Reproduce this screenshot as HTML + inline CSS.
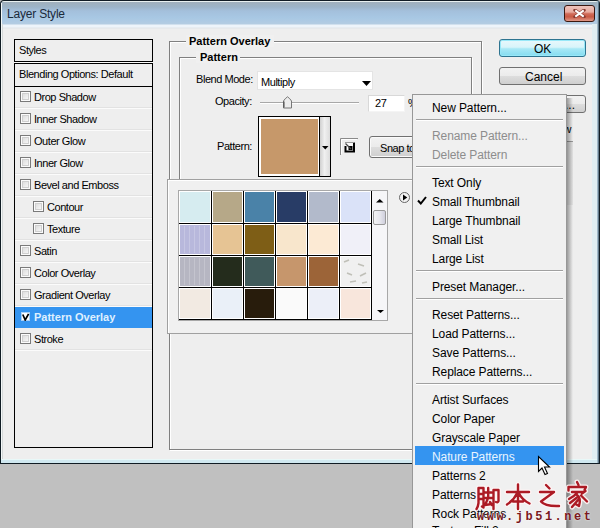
<!DOCTYPE html>
<html><head><meta charset="utf-8">
<style>
*{margin:0;padding:0;box-sizing:border-box}
html,body{width:600px;height:528px;overflow:hidden;background:#c0c0c0;font-family:"Liberation Sans",sans-serif;}
.a{position:absolute}
.t{position:absolute;white-space:nowrap;font-size:11px;line-height:11px;letter-spacing:-0.45px;color:#000}
.m{position:absolute;white-space:nowrap;font-size:12px;line-height:12px;letter-spacing:-0.1px;color:#000}
</style></head><body>
<!-- window frame -->
<div class="a" style="left:0;top:0;width:600px;height:464px;background:#101c24;border-radius:4px 4px 0 0"></div>
<div class="a" style="left:1px;top:1px;width:598px;height:462px;background:linear-gradient(#e8f0f0 0px,#e8f0f0 1px,#a0b0bc 1px,#9cb4c8 6px,#a4c0dc 10px,#a8c8e4 17px,#b4cce2 23px,#eef4fa 24px,#eef4fa 26px,#e0e4e8 27px,#eeeeee 28px);border-radius:3px 3px 0 0"></div>
<div class="a" style="left:1px;top:3px;width:1px;height:456px;background:#f4f8f8"></div>
<div class="a" style="left:2px;top:24px;width:1px;height:435px;background:#d4d8d8"></div>
<div class="a" style="left:592px;top:24px;width:5px;height:439px;background:#e0eef2"></div>
<div class="a" style="left:597px;top:1px;width:1px;height:462px;background:#a0b8c8"></div>
<div class="a" style="left:598px;top:1px;width:1px;height:462px;background:#607888"></div>
<div class="a" style="left:1px;top:459px;width:596px;height:1px;background:#e8f8f8"></div>
<div class="a" style="left:1px;top:460px;width:596px;height:3px;background:#d0e8f0"></div>
<div class="a" style="left:7px;top:8px;font-size:12px;line-height:12px;letter-spacing:-0.2px;color:#1a2a3a;white-space:nowrap">Layer Style</div>
<!-- close btn -->
<div class="a" style="left:564px;top:5px;width:31px;height:17px;border:1px solid #3a1810;border-radius:3px;background:linear-gradient(#f0c4bc 0%,#e8aca0 40%,#d06a58 52%,#c85a44 72%,#e09888 100%)"></div>
<svg class="a" style="left:573px;top:9px" width="13" height="9" viewBox="0 0 13 9"><path d="M2 1.2 L11 7.8 M11 1.2 L2 7.8" stroke="#8a3a30" stroke-width="3.4" stroke-linecap="round"/><path d="M2.3 1.4 L10.7 7.6 M10.7 1.4 L2.3 7.6" stroke="#fff" stroke-width="2"/></svg>
<!-- left styles panel -->
<div class="a" style="left:14px;top:39px;width:139px;height:409px;border:1px solid #000;background:#eeeeee"></div>
<div class="a" style="left:14px;top:61px;width:139px;height:3px;border-top:1px solid #000;border-bottom:1px solid #000;background:#fafafa"></div>
<div class="t" style="left:19px;top:45px">Styles</div>
<div class="a" style="left:15px;top:86px;width:137px;height:1px;background:#000"></div>
<div class="t" style="left:19px;top:69px">Blending Options: Default</div>
<div id="rows"><div class="a" style="left:15px;top:107px;width:137px;height:1px;background:#e2e2e2"></div><div class="a" style="left:15px;top:108px;width:137px;height:1px;background:#fbfbfb"></div><div class="a" style="left:20px;top:91px;width:11px;height:11px;border:1px solid #7a7a7a;background:#fbfbfb"></div><div class="a" style="left:22px;top:93px;width:7px;height:7px;border:1px solid #cfcfcf;background:linear-gradient(135deg,#dedede,#f6f6f6)"></div><div class="t" style="left:34px;top:92px">Drop Shadow</div><div class="a" style="left:15px;top:129px;width:137px;height:1px;background:#e2e2e2"></div><div class="a" style="left:15px;top:130px;width:137px;height:1px;background:#fbfbfb"></div><div class="a" style="left:20px;top:113px;width:11px;height:11px;border:1px solid #7a7a7a;background:#fbfbfb"></div><div class="a" style="left:22px;top:115px;width:7px;height:7px;border:1px solid #cfcfcf;background:linear-gradient(135deg,#dedede,#f6f6f6)"></div><div class="t" style="left:34px;top:114px">Inner Shadow</div><div class="a" style="left:15px;top:151px;width:137px;height:1px;background:#e2e2e2"></div><div class="a" style="left:15px;top:152px;width:137px;height:1px;background:#fbfbfb"></div><div class="a" style="left:20px;top:135px;width:11px;height:11px;border:1px solid #7a7a7a;background:#fbfbfb"></div><div class="a" style="left:22px;top:137px;width:7px;height:7px;border:1px solid #cfcfcf;background:linear-gradient(135deg,#dedede,#f6f6f6)"></div><div class="t" style="left:34px;top:136px">Outer Glow</div><div class="a" style="left:15px;top:173px;width:137px;height:1px;background:#e2e2e2"></div><div class="a" style="left:15px;top:174px;width:137px;height:1px;background:#fbfbfb"></div><div class="a" style="left:20px;top:157px;width:11px;height:11px;border:1px solid #7a7a7a;background:#fbfbfb"></div><div class="a" style="left:22px;top:159px;width:7px;height:7px;border:1px solid #cfcfcf;background:linear-gradient(135deg,#dedede,#f6f6f6)"></div><div class="t" style="left:34px;top:158px">Inner Glow</div><div class="a" style="left:15px;top:195px;width:137px;height:1px;background:#e2e2e2"></div><div class="a" style="left:15px;top:196px;width:137px;height:1px;background:#fbfbfb"></div><div class="a" style="left:20px;top:179px;width:11px;height:11px;border:1px solid #7a7a7a;background:#fbfbfb"></div><div class="a" style="left:22px;top:181px;width:7px;height:7px;border:1px solid #cfcfcf;background:linear-gradient(135deg,#dedede,#f6f6f6)"></div><div class="t" style="left:34px;top:180px">Bevel and Emboss</div><div class="a" style="left:15px;top:217px;width:137px;height:1px;background:#e2e2e2"></div><div class="a" style="left:15px;top:218px;width:137px;height:1px;background:#fbfbfb"></div><div class="a" style="left:33px;top:201px;width:11px;height:11px;border:1px solid #7a7a7a;background:#fbfbfb"></div><div class="a" style="left:35px;top:203px;width:7px;height:7px;border:1px solid #cfcfcf;background:linear-gradient(135deg,#dedede,#f6f6f6)"></div><div class="t" style="left:47px;top:202px">Contour</div><div class="a" style="left:15px;top:239px;width:137px;height:1px;background:#e2e2e2"></div><div class="a" style="left:15px;top:240px;width:137px;height:1px;background:#fbfbfb"></div><div class="a" style="left:33px;top:223px;width:11px;height:11px;border:1px solid #7a7a7a;background:#fbfbfb"></div><div class="a" style="left:35px;top:225px;width:7px;height:7px;border:1px solid #cfcfcf;background:linear-gradient(135deg,#dedede,#f6f6f6)"></div><div class="t" style="left:47px;top:224px">Texture</div><div class="a" style="left:15px;top:261px;width:137px;height:1px;background:#e2e2e2"></div><div class="a" style="left:15px;top:262px;width:137px;height:1px;background:#fbfbfb"></div><div class="a" style="left:20px;top:245px;width:11px;height:11px;border:1px solid #7a7a7a;background:#fbfbfb"></div><div class="a" style="left:22px;top:247px;width:7px;height:7px;border:1px solid #cfcfcf;background:linear-gradient(135deg,#dedede,#f6f6f6)"></div><div class="t" style="left:34px;top:246px">Satin</div><div class="a" style="left:15px;top:283px;width:137px;height:1px;background:#e2e2e2"></div><div class="a" style="left:15px;top:284px;width:137px;height:1px;background:#fbfbfb"></div><div class="a" style="left:20px;top:267px;width:11px;height:11px;border:1px solid #7a7a7a;background:#fbfbfb"></div><div class="a" style="left:22px;top:269px;width:7px;height:7px;border:1px solid #cfcfcf;background:linear-gradient(135deg,#dedede,#f6f6f6)"></div><div class="t" style="left:34px;top:268px">Color Overlay</div><div class="a" style="left:15px;top:305px;width:137px;height:1px;background:#e2e2e2"></div><div class="a" style="left:15px;top:306px;width:137px;height:1px;background:#fbfbfb"></div><div class="a" style="left:20px;top:289px;width:11px;height:11px;border:1px solid #7a7a7a;background:#fbfbfb"></div><div class="a" style="left:22px;top:291px;width:7px;height:7px;border:1px solid #cfcfcf;background:linear-gradient(135deg,#dedede,#f6f6f6)"></div><div class="t" style="left:34px;top:290px">Gradient Overlay</div><div class="a" style="left:15px;top:307px;width:137px;height:21px;background:#3494f0"></div><div class="a" style="left:21px;top:312px;width:9px;height:9px;border:1px solid #a8d0f8;background:#fff"></div><svg class="a" style="left:21px;top:312px" width="9" height="9"><path d="M1.8 2.5 L4.2 8 L7.6 1.8" stroke="#000" stroke-width="1.7" fill="none"/></svg><div class="t" style="left:34px;top:312px;font-weight:bold;letter-spacing:0;color:#dff0ff">Pattern Overlay</div><div class="a" style="left:15px;top:349px;width:137px;height:1px;background:#e2e2e2"></div><div class="a" style="left:15px;top:350px;width:137px;height:1px;background:#fbfbfb"></div><div class="a" style="left:20px;top:333px;width:11px;height:11px;border:1px solid #7a7a7a;background:#fbfbfb"></div><div class="a" style="left:22px;top:335px;width:7px;height:7px;border:1px solid #cfcfcf;background:linear-gradient(135deg,#dedede,#f6f6f6)"></div><div class="t" style="left:34px;top:334px">Stroke</div></div>

<!-- right group box -->
<div class="a" style="left:169px;top:41px;width:313px;height:409px;border:1px solid #808080;box-shadow:inset 1px 1px 0 #fff, 1px 1px 0 #fff"></div>
<div class="a" style="left:186px;top:35px;width:88px;height:12px;background:#f0f0f0"></div>
<div class="t" style="left:189px;top:36px;font-weight:bold;letter-spacing:0">Pattern Overlay</div>
<div class="a" style="left:179px;top:57px;width:293px;height:200px;border:1px solid #808080;box-shadow:inset 1px 1px 0 #fff, 1px 1px 0 #fff"></div>
<div class="a" style="left:196px;top:51px;width:44px;height:12px;background:#f0f0f0"></div>
<div class="t" style="left:200px;top:52px;font-weight:bold;letter-spacing:0">Pattern</div>

<div class="t" style="left:196px;top:74px">Blend Mode:</div>
<div class="a" style="left:257px;top:71px;width:116px;height:19px;background:#fff;border:1px solid #e4e4e4"></div>
<div class="t" style="left:261px;top:77px">Multiply</div>
<svg class="a" style="left:362px;top:81px" width="10" height="6"><path d="M0 0 H9 L4.5 5 Z" fill="#000"/></svg>

<div class="t" style="left:215px;top:96px">Opacity:</div>
<div class="a" style="left:260px;top:102px;width:99px;height:2px;border-top:1px solid #a8a8a8;border-bottom:1px solid #fff"></div>
<svg class="a" style="left:282px;top:96px" width="11" height="13"><path d="M1.5 12 V5 Q3 2.5 5.5 0.8 Q8 2.5 9.5 5 V12 Z" fill="#ececec" stroke="#777" stroke-linejoin="round"/><path d="M2 11.5 V5.5" stroke="#444"/></svg>
<div class="a" style="left:368px;top:95px;width:37px;height:17px;background:#fff;border:1px solid #d8d8d8;border-right-color:#f4f4f4;border-bottom-color:#f4f4f4"></div>
<div class="t" style="left:375px;top:98px">27</div>
<div class="t" style="left:408px;top:98px">%</div>

<div class="t" style="left:217px;top:141px">Pattern:</div>
<div class="a" style="left:258px;top:116px;width:73px;height:61px;background:#fff;border:1px solid #000"></div>
<div class="a" style="left:261px;top:119px;width:57px;height:55px;background:#c6986a"></div>
<div class="a" style="left:319px;top:117px;width:1px;height:59px;background:#000"></div>
<div class="a" style="left:320px;top:117px;width:10px;height:59px;background:linear-gradient(90deg,#d0d0d0,#f0f0f0 45%,#dcdcdc)"></div>
<svg class="a" style="left:322px;top:146px" width="8" height="4"><path d="M0 0 H6.5 L3.25 3.5 Z" fill="#000"/></svg>

<svg class="a" style="left:336px;top:134px" width="26" height="26"><path d="M4.5 21 V4.5 H22" stroke="#8a8a8a" fill="none"/><path d="M5.5 20 V5.5 H21" stroke="#fff" fill="none"/>
<rect x="9" y="8.5" width="10" height="10" fill="#fafafa"/>
<path d="M18 8.5 V17.5 H9.5 V12" stroke="#000" stroke-width="2" fill="none"/>
<rect x="12.5" y="12" width="4" height="4" fill="#000"/>
<path d="M9.5 9.5 L15 15" stroke="#444" stroke-width="1.3"/>
<path d="M9 8.5 H18" stroke="#9a9a9a"/></svg>
<div class="a" style="left:369px;top:136px;width:60px;height:22px;border:1px solid #707070;border-radius:3px;box-shadow:inset 0 0 0 1px #fafafa;background:linear-gradient(#f2f2f2 0%,#ebebeb 50%,#dddddd 51%,#cfcfcf 100%)"></div>
<div class="t" style="left:380px;top:143px">Snap to Origin</div>

<!-- OK / Cancel / New Style -->
<div class="a" style="left:499px;top:39px;width:87px;height:18px;border:1px solid #2e7490;border-radius:3px;background:linear-gradient(#e8f8fc 0%,#d8f4fa 45%,#a8e8f6 55%,#84dcf0 100%);box-shadow:inset 0 0 0 1px #98e8f8"></div>
<div class="t" style="left:534px;top:44px;font-size:12px;letter-spacing:0">OK</div>
<div class="a" style="left:499px;top:67px;width:87px;height:18px;border:1px solid #707070;border-radius:3px;background:linear-gradient(#f2f2f2 0%,#ebebeb 50%,#dddddd 51%,#cfcfcf 100%)"></div>
<div class="t" style="left:525px;top:72px;font-size:12px;letter-spacing:0">Cancel</div>
<div class="a" style="left:499px;top:95px;width:87px;height:18px;border:1px solid #707070;border-radius:3px;background:linear-gradient(#f2f2f2 0%,#ebebeb 50%,#dddddd 51%,#cfcfcf 100%)"></div>
<div class="t" style="left:511px;top:100px;font-size:12px;letter-spacing:0">New Style...</div>
<div class="t" style="left:535px;top:124px">Preview</div>
<div class="a" style="left:520px;top:141px;width:53px;height:64px;border-top:1px solid #999;background:#e2e2e2"></div>

<!-- pattern picker popup -->
<div class="a" style="left:167px;top:179px;width:250px;height:155px;background:#f0f0f0;border:1px solid #a0a0a0;box-shadow:inset 1px 1px 0 #fff"></div>
<div class="a" style="left:178px;top:190px;width:210px;height:131px;background:#f4f4f4;border:1px solid #a8a8a8"></div>
<div id="grid" class="a" style="left:179px;top:191px;width:193px;height:129px;background:#000"><div class="a" style="left:0px;top:0px;width:32px;height:32px;border:1px solid #fff;background:#d6ecf0"></div><div class="a" style="left:33px;top:0px;width:31px;height:32px;border:1px solid #fff;background:#b6a888"></div><div class="a" style="left:65px;top:0px;width:31px;height:32px;border:1px solid #fff;background:#4a82a8"></div><div class="a" style="left:97px;top:0px;width:31px;height:32px;border:1px solid #fff;background:#283c66"></div><div class="a" style="left:129px;top:0px;width:31px;height:32px;border:1px solid #fff;background:#b2bacb"></div><div class="a" style="left:161px;top:0px;width:31px;height:32px;border:1px solid #fff;background:#dae2f8"></div><div class="a" style="left:0px;top:33px;width:32px;height:31px;border:1px solid #fff;background:#b8b8dc"></div><div class="a" style="left:33px;top:33px;width:31px;height:31px;border:1px solid #fff;background:#e6c494"></div><div class="a" style="left:65px;top:33px;width:31px;height:31px;border:1px solid #fff;background:#7e5e16"></div><div class="a" style="left:97px;top:33px;width:31px;height:31px;border:1px solid #fff;background:#f8e6cc"></div><div class="a" style="left:129px;top:33px;width:31px;height:31px;border:1px solid #fff;background:#fcead4"></div><div class="a" style="left:161px;top:33px;width:31px;height:31px;border:1px solid #fff;background:#f0f0f8"></div><div class="a" style="left:0px;top:65px;width:32px;height:31px;border:1px solid #fff;background:#b6b6c2"></div><div class="a" style="left:33px;top:65px;width:31px;height:31px;border:1px solid #fff;background:#242c1c"></div><div class="a" style="left:65px;top:65px;width:31px;height:31px;border:1px solid #fff;background:#405a5a"></div><div class="a" style="left:97px;top:65px;width:31px;height:31px;border:1px solid #fff;background:#c6966c"></div><div class="a" style="left:129px;top:65px;width:31px;height:31px;border:1px solid #fff;background:#9c6438"></div><div class="a" style="left:161px;top:65px;width:31px;height:31px;border:1px solid #fff;background:#f0f0f0"></div><div class="a" style="left:0px;top:97px;width:32px;height:31px;border:1px solid #fff;background:#f2eae2"></div><div class="a" style="left:33px;top:97px;width:31px;height:31px;border:1px solid #fff;background:#eaf0f8"></div><div class="a" style="left:65px;top:97px;width:31px;height:31px;border:1px solid #fff;background:#281c0c"></div><div class="a" style="left:97px;top:97px;width:31px;height:31px;border:1px solid #fff;background:#fafafa"></div><div class="a" style="left:129px;top:97px;width:31px;height:31px;border:1px solid #fff;background:#eceff8"></div><div class="a" style="left:161px;top:97px;width:31px;height:31px;border:1px solid #fff;background:#f8e6dc"></div><svg class="a" style="left:161px;top:65px" width="31" height="31"><g stroke="#c0c0b8" stroke-width="1.7"><path d="M4 6 L9 4"/><path d="M18 8 L24 10"/><path d="M7 17 L12 19"/><path d="M20 20 L26 17"/><path d="M10 26 L16 25"/><path d="M22 27 L27 26"/></g></svg><svg class="a" style="left:2px;top:35px" width="28" height="27"><g stroke="#ffffff" stroke-opacity="0.2" stroke-width="1"><path d="M3.5 0V27M8.5 0V27M13.5 0V27M18.5 0V27M23.5 0V27"/></g></svg><svg class="a" style="left:2px;top:67px" width="28" height="27"><g stroke="#ffffff" stroke-opacity="0.2" stroke-width="1"><path d="M3.5 0V27M8.5 0V27M13.5 0V27M18.5 0V27M23.5 0V27"/></g></svg></div>
<div class="a" style="left:372px;top:191px;width:15px;height:129px;background:#f6f6f8"></div>
<svg class="a" style="left:376px;top:199px" width="8" height="4"><path d="M0 3.5 H7.5 L3.75 0 Z" fill="#000"/></svg>
<div class="a" style="left:373px;top:210px;width:13px;height:15px;border:1px solid #9a9a9a;border-radius:2px;background:linear-gradient(90deg,#f4f4f4,#e8e8ee 50%,#cfcfdc)"></div>
<svg class="a" style="left:377px;top:310px" width="8" height="4"><path d="M0 0 H7 L3.5 3 Z" fill="#000"/></svg>
<svg class="a" style="left:399px;top:192px" width="12" height="12"><circle cx="5.5" cy="5.5" r="5" fill="#f2f2f2" stroke="#666"/><path d="M4 2.5 L8.3 5.5 L4 8.5 Z" fill="#000"/></svg>

<!-- menu -->
<div class="a" style="left:567px;top:98px;width:6px;height:430px;background:linear-gradient(90deg,rgba(0,0,0,0.35),rgba(0,0,0,0))"></div>
<div id="menu" class="a" style="left:412px;top:94px;width:155px;height:440px;background:#f0f0f0;border:1px solid #979797"></div>
<div id="mitems"><div class="m" style="left:432px;top:102px;color:#000">New Pattern...</div><div class="a" style="left:416px;top:119px;width:147px;height:1px;background:#a0a0a0"></div><div class="a" style="left:416px;top:120px;width:147px;height:1px;background:#fff"></div><div class="m" style="left:432px;top:130px;color:#8d8d8d">Rename Pattern...</div><div class="m" style="left:432px;top:149px;color:#8d8d8d">Delete Pattern</div><div class="a" style="left:416px;top:166px;width:147px;height:1px;background:#a0a0a0"></div><div class="a" style="left:416px;top:167px;width:147px;height:1px;background:#fff"></div><div class="m" style="left:432px;top:177px;color:#000">Text Only</div><svg class="a" style="left:417px;top:196px" width="10" height="9"><path d="M1 4.5 L3.8 7.5 L9 1" stroke="#000" stroke-width="2" fill="none"/></svg><div class="m" style="left:432px;top:196px;color:#000">Small Thumbnail</div><div class="m" style="left:432px;top:215px;color:#000">Large Thumbnail</div><div class="m" style="left:432px;top:234px;color:#000">Small List</div><div class="m" style="left:432px;top:253px;color:#000">Large List</div><div class="a" style="left:416px;top:270px;width:147px;height:1px;background:#a0a0a0"></div><div class="a" style="left:416px;top:271px;width:147px;height:1px;background:#fff"></div><div class="m" style="left:432px;top:281px;color:#000">Preset Manager...</div><div class="a" style="left:416px;top:298px;width:147px;height:1px;background:#a0a0a0"></div><div class="a" style="left:416px;top:299px;width:147px;height:1px;background:#fff"></div><div class="m" style="left:432px;top:309px;color:#000">Reset Patterns...</div><div class="m" style="left:432px;top:328px;color:#000">Load Patterns...</div><div class="m" style="left:432px;top:347px;color:#000">Save Patterns...</div><div class="m" style="left:432px;top:366px;color:#000">Replace Patterns...</div><div class="a" style="left:416px;top:383px;width:147px;height:1px;background:#a0a0a0"></div><div class="a" style="left:416px;top:384px;width:147px;height:1px;background:#fff"></div><div class="m" style="left:432px;top:394px;color:#000">Artist Surfaces</div><div class="m" style="left:432px;top:413px;color:#000">Color Paper</div><div class="m" style="left:432px;top:432px;color:#000">Grayscale Paper</div><div class="a" style="left:415px;top:446px;width:149px;height:19px;background:#3494f0"></div><div class="m" style="left:432px;top:451px;color:#e8f4ff">Nature Patterns</div><div class="m" style="left:432px;top:470px;color:#000">Patterns 2</div><div class="m" style="left:432px;top:489px;color:#000">Patterns</div><div class="m" style="left:432px;top:508px;color:#000">Rock Patterns</div><div class="m" style="left:432px;top:525px;color:#000">Texture Fill 2</div></div>

<svg class="a" style="left:537px;top:455px" width="14" height="21"><path d="M1.5 1.5 V16.5 L5 13 L8 19.5 L10.5 18.5 L7.5 12 H12.5 Z" fill="#fff" stroke="#000" stroke-width="1.1" stroke-linejoin="miter"/></svg>
<!-- watermark -->
<svg class="a" style="left:0;top:0" width="600" height="528"><g fill="none" stroke-linecap="round" stroke-linejoin="round"><path transform="translate(476 484)" d="M2.5 4 V19 Q2 23 0.5 25 M2.5 4 H7.5 V23.5 L6 22.5 M2.5 10 H7.5 M2.5 15 H7.5 M9 8.5 H15.5 M12.2 4 V13.5 M8.5 14 H16.5 M11.5 15.5 L9 21 L15.5 20 M14 18 L16 21 M17.5 6 H22.5 V17 Q22 19 20 18 M17.5 6 V25" stroke="#fff4f4" stroke-opacity="0.9" stroke-width="5"/><path transform="translate(506 483)" d="M1 9 H23 M12 1.5 V26 M11.5 9.5 Q8 17 1 21.5 M12.5 9.5 Q16 17 23.5 20.5 M7 18.5 H17" stroke="#fff4f4" stroke-opacity="0.9" stroke-width="5"/><path transform="translate(536 484)" d="M10 1 L13.5 4.5 M4 8 H18 L5 17.5 Q9 22.5 23 22" stroke="#fff4f4" stroke-opacity="0.9" stroke-width="5"/><path transform="translate(566 481)" d="M11 1 L12.5 4 M2.5 6 V9.5 M2.5 6 H20 L18.5 9 M6 11 H17 M12 11 Q8 15.5 3 18 M10.5 13.5 Q15.5 17 13 25 L9.5 23 M11 16.5 L4 22 M12 19 L6 26 M15 14.5 L21 20.5 M16 12.5 L19.5 10" stroke="#fff4f4" stroke-opacity="0.9" stroke-width="5"/><path transform="translate(476 484)" d="M2.5 4 V19 Q2 23 0.5 25 M2.5 4 H7.5 V23.5 L6 22.5 M2.5 10 H7.5 M2.5 15 H7.5 M9 8.5 H15.5 M12.2 4 V13.5 M8.5 14 H16.5 M11.5 15.5 L9 21 L15.5 20 M14 18 L16 21 M17.5 6 H22.5 V17 Q22 19 20 18 M17.5 6 V25" stroke="#ac1a24" stroke-width="2.4"/><path transform="translate(506 483)" d="M1 9 H23 M12 1.5 V26 M11.5 9.5 Q8 17 1 21.5 M12.5 9.5 Q16 17 23.5 20.5 M7 18.5 H17" stroke="#ac1a24" stroke-width="2.4"/><path transform="translate(536 484)" d="M10 1 L13.5 4.5 M4 8 H18 L5 17.5 Q9 22.5 23 22" stroke="#ac1a24" stroke-width="2.4"/><path transform="translate(566 481)" d="M11 1 L12.5 4 M2.5 6 V9.5 M2.5 6 H20 L18.5 9 M6 11 H17 M12 11 Q8 15.5 3 18 M10.5 13.5 Q15.5 17 13 25 L9.5 23 M11 16.5 L4 22 M12 19 L6 26 M15 14.5 L21 20.5 M16 12.5 L19.5 10" stroke="#ac1a24" stroke-width="2.4"/></g></svg>
<div class="a" style="left:477px;top:511px;font-family:'Liberation Mono',monospace;font-weight:bold;font-size:12px;line-height:12px;color:#7a1820;white-space:nowrap;letter-spacing:2.5px;text-shadow:0 0 2px #fff">www.jb51.net</div>
</body></html>
